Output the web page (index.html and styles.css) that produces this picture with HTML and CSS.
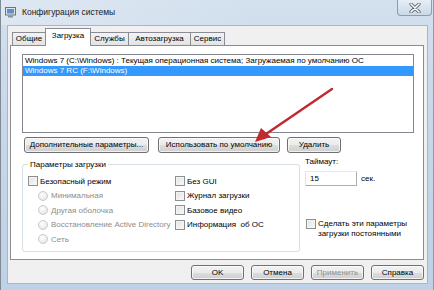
FILE: index.html
```html
<!DOCTYPE html>
<html lang="ru">
  <head>
    <meta charset="UTF-8" />
    <title>Конфигурация системы</title>
    <link rel="stylesheet" href="styles.css">
  </head>
  <body>
    <div class="window">
      <div class="titlebar">
        <svg class="appIcon" width="11" height="11" viewBox="0 0 11 11">
          <rect x="0.5" y="0.5" width="10" height="7.5" fill="#dfe4ea" stroke="#6b7480" />
          <rect x="2" y="2" width="7" height="4.5" fill="#5d8fc9" />
          <rect x="3" y="8.5" width="5" height="2" fill="#8a929c" />
        </svg>
        <span class="title">Конфигурация системы</span>
        <div class="closeBtn">
          <svg width="12" height="10" viewBox="0 0 12 10">
            <path d="M2 1 L10 9 M10 1 L2 9" stroke="#5b6470" stroke-width="3.2" stroke-linecap="round" />
            <path d="M2 1 L10 9 M10 1 L2 9" stroke="#ffffff" stroke-width="1.6" stroke-linecap="round" />
          </svg>
        </div>
      </div>

      <div class="client">
        <div class="tabs">
          <div class="tab t1">Общие</div>
          <div class="tab t2 active">Загрузка</div>
          <div class="tab t3">Службы</div>
          <div class="tab t4">Автозагрузка</div>
          <div class="tab t5">Сервис</div>
        </div>

        <div class="panel">
          <div class="osList">
            <div class="os">Windows 7 (C:\Windows) : Текущая операционная система; Загружаемая по умолчанию ОС</div>
            <div class="os selected">Windows 7 RC (F:\Windows)</div>
          </div>

          <div class="listButtons">
            <div class="btn wAdv">Дополнительные параметры...</div>
            <div class="btn wDef">Использовать по умолчанию</div>
            <div class="btn wDel">Удалить</div>
          </div>

          <div class="options">
            <fieldset class="group">
              <legend>Параметры загрузки</legend>
              <div class="cols">
                <div class="col left">
                  <div class="item"><span class="check"></span>Безопасный режим</div>
                  <div class="item sub disabled"><span class="radio"></span>Минимальная</div>
                  <div class="item sub disabled"><span class="radio"></span>Другая оболочка</div>
                  <div class="item sub disabled"><span class="radio"></span>Восстановление Active Directory</div>
                  <div class="item sub disabled"><span class="radio"></span>Сеть</div>
                </div>
                <div class="col right">
                  <div class="item"><span class="check"></span>Без GUI</div>
                  <div class="item"><span class="check"></span>Журнал загрузки</div>
                  <div class="item"><span class="check"></span>Базовое видео</div>
                  <div class="item"><span class="check"></span>Информация&nbsp; об ОС</div>
                </div>
              </div>
            </fieldset>

            <div class="side">
              <div class="timeoutLabel">Таймаут:</div>
              <div class="timeoutRow">
                <div class="input">15</div>
                <span>сек.</span>
              </div>
              <div class="permanent">
                <span class="check"></span>
                <span>Сделать эти параметры<br>загрузки постоянными</span>
              </div>
            </div>
          </div>
        </div>

        <div class="footer">
          <div class="btn">OK</div>
          <div class="btn">Отмена</div>
          <div class="btn disabled">Применить</div>
          <div class="btn">Справка</div>
        </div>
      </div>

      <!-- red arrow drawn over the dialog -->
      <svg class="arrow" width="434" height="290" viewBox="0 0 434 290">
        <line x1="331" y1="89" x2="265" y2="134" stroke="#c0292d" stroke-width="2.4" stroke-linecap="round" />
        <polygon points="254,142 260,128 270,137" fill="#c0292d" />
      </svg>
    </div>
  </body>
</html>
```

FILE: styles.css
```css
* {
  box-sizing: border-box;
}

body {
  margin: 0;
  font-family: "Liberation Sans", Arial, sans-serif;
  font-size: 8px;
  color: #000;
}

.window {
  position: relative;
  width: 434px;
  height: 290px;
  display: flex;
  flex-direction: column;
  background: linear-gradient(180deg, #d3e0ee 0%, #c8d8ea 40%, #bfd1e6 100%);
  border-left: 1px solid #7f8a96;
  border-right: 1px solid #8f9baa;
}

.titlebar {
  height: 25px;
  display: flex;
  align-items: flex-start;
  padding-left: 4px;
  background: linear-gradient(90deg, rgba(255, 255, 255, 0.25), rgba(255, 255, 255, 0) 60%);
}

.appIcon {
  margin-top: 7px;
}

.title {
  margin-top: 6px;
  margin-left: 6px;
  font-size: 8.5px;
  line-height: 12px;
  color: #1a1a1a;
}

.closeBtn {
  margin-left: auto;
  margin-right: 1px;
  width: 35px;
  height: 16px;
  display: flex;
  align-items: center;
  justify-content: center;
  border: 1px solid #8b9bb0;
  border-top: none;
  border-radius: 0 0 4px 4px;
  background: linear-gradient(180deg, #e6eef7, #cbd8e7);
}

.client {
  flex: 1;
  margin: 0 5px 6px 6px;
  background: #f0f0f0;
  border: 1px solid #a9b6c4;
  display: flex;
  flex-direction: column;
  padding: 2px 3px 0 2px;
}

.tabs {
  display: flex;
  align-items: flex-end;
  padding-left: 2px;
  height: 17px;
  position: relative;
  z-index: 1;
}

.tab {
  height: 13px;
  line-height: 12px;
  text-align: center;
  border: 1px solid #898c95;
  border-bottom: none;
  margin-right: -1px;
  background: linear-gradient(180deg, #f3f3f3, #e3e3e3);
  white-space: nowrap;
}

.t1 {
  width: 34px;
}

.t2 {
  width: 46px;
}

.t3 {
  width: 39px;
}

.t4 {
  width: 63px;
}

.t5 {
  width: 35px;
}

.tab.active {
  height: 18px;
  margin-bottom: -1px;
  line-height: 14px;
  background: #ffffff;
  position: relative;
}

.panel {
  height: 215px;
  background: #fff;
  border: 1px solid #898c95;
  padding: 8px 9px 0 11px;
}

.osList {
  height: 79px;
  border: 1px solid #828790;
  padding-top: 1px;
}

.os {
  height: 10px;
  line-height: 10px;
  padding-left: 2px;
  white-space: nowrap;
}

.os.selected {
  background: #3399ff;
  color: #fff;
}

.listButtons {
  display: flex;
  margin-top: 4px;
  margin-left: 2px;
}

.btn {
  height: 16px;
  line-height: 14px;
  text-align: center;
  border: 1px solid #707070;
  border-radius: 3px;
  background: linear-gradient(180deg, #f2f2f2 0%, #ebebeb 50%, #dddddd 51%, #cfcfcf 100%);
  box-shadow: inset 0 0 0 1px rgba(255, 255, 255, 0.7);
  white-space: nowrap;
}

.wAdv {
  width: 125px;
}

.wDef {
  width: 122px;
  margin-left: 9px;
}

.wDel {
  width: 54px;
  margin-left: 7px;
}

.options {
  display: flex;
  margin-top: 6px;
}

.group {
  margin: 0;
  width: 278px;
  height: 93px;
  border: 1px solid #d5dfe5;
  border-radius: 3px;
  padding: 4px 0 0 5px;
}

.group legend {
  padding: 0 2px;
  margin-left: 0;
  line-height: 11px;
}

.cols {
  display: flex;
}

.col.left {
  width: 147px;
}

.item {
  display: flex;
  align-items: center;
  height: 14.5px;
  white-space: nowrap;
}

.item.sub {
  padding-left: 10px;
}

.disabled {
  color: #8d8d8d;
}

.check {
  display: inline-block;
  width: 10px;
  height: 10px;
  margin-right: 2px;
  border: 1px solid #8e8f8f;
  background: linear-gradient(135deg, #e2e2e2, #fafafa);
  box-shadow: inset 0 0 0 1px #f4f4f4;
  flex-shrink: 0;
}

.radio {
  display: inline-block;
  width: 10px;
  height: 10px;
  margin-right: 3px;
  border: 1px solid #cbcbcb;
  border-radius: 50%;
  background: radial-gradient(circle at 40% 35%, #ffffff, #e0e0e0);
  flex-shrink: 0;
}

.side {
  margin-left: 5px;
  padding-top: 0;
}

.timeoutLabel {
  line-height: 11px;
  margin-top: -3px;
}

.timeoutRow {
  display: flex;
  align-items: center;
  margin-top: 4px;
}

.input {
  width: 52px;
  height: 15px;
  line-height: 13px;
  padding-left: 4px;
  border: 1px solid #abadb3;
  border-top-color: #e3e9ef;
  border-left-color: #e2e3ea;
  background: #fff;
}

.timeoutRow span {
  margin-left: 4px;
}

.permanent {
  display: flex;
  align-items: flex-start;
  margin-top: 33px;
  margin-left: 1px;
  line-height: 9.5px;
  white-space: nowrap;
}

.footer {
  display: flex;
  justify-content: flex-end;
  gap: 7px;
  margin-top: 5px;
}

.footer .btn {
  width: 53px;
  height: 15px;
  line-height: 13px;
}

.arrow {
  position: absolute;
  left: 0;
  top: 0;
  pointer-events: none;
}
```
